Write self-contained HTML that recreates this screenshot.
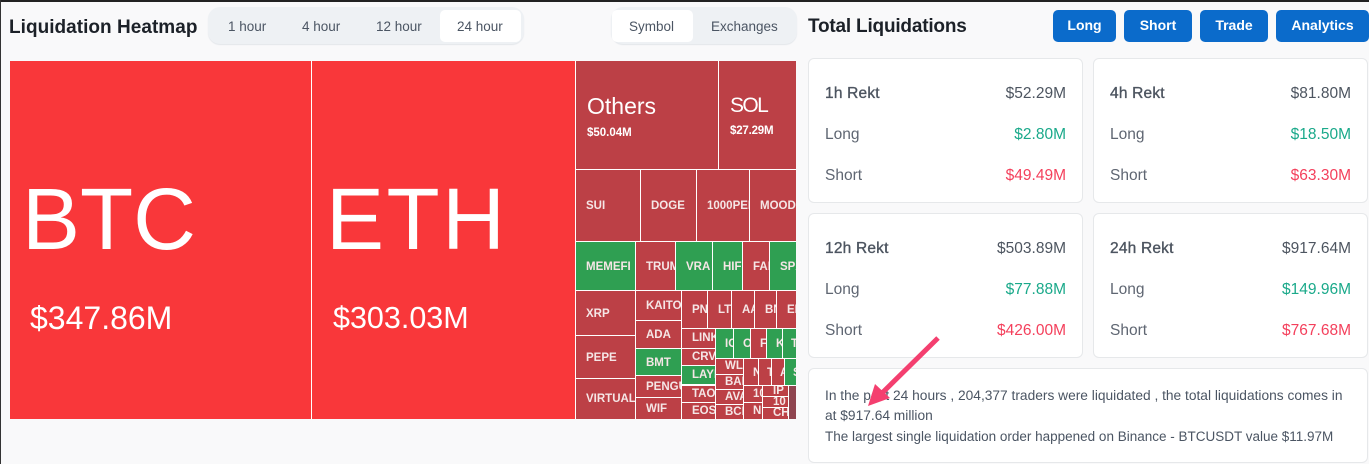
<!DOCTYPE html>
<html><head><meta charset="utf-8">
<style>
*{box-sizing:border-box}
html,body{margin:0;padding:0;width:1369px;height:464px;overflow:hidden;background:#f9f9fa;font-family:"Liberation Sans",sans-serif}
.a{position:absolute;white-space:nowrap}
.c{position:absolute;overflow:hidden;white-space:nowrap;color:#f5e6e6;font-size:11.5px;font-weight:bold;padding-left:10px;padding-top:1px}
.r{background:#bc4046}.g{background:#2f9f52}
.b{position:absolute;top:10px;height:32px;line-height:30px;background:#0b6bcb;color:#fff;font-weight:bold;font-size:14px;text-align:center;border-radius:5px}
.card{position:absolute;background:#fff;border:1px solid #e6e8ea;border-radius:6px}
.t{position:absolute;font-size:13.5px;color:#4b5563;white-space:nowrap;line-height:20px}
.l,.v{position:absolute;font-size:15.5px;line-height:20px;white-space:nowrap;color:#5f6672}
.v{text-align:right;color:#4d5560}
.gr{color:#1aa98a}.rd{color:#f4405c}
.hd{color:#4d5560;font-size:15.5px;-webkit-text-stroke:.35px #4d5560;letter-spacing:.2px}
.p{font-size:13.75px;line-height:20px;color:#4b5563}
</style></head><body>
<div class="a" style="left:0;top:0;width:1369px;height:2px;background:#222"></div>
<div class="a" style="left:0;top:0;width:1px;height:464px;background:#333"></div>

<div class="a" style="left:9px;top:16px;font-size:19px;font-weight:bold;color:#1c2128;line-height:24px;letter-spacing:.03px">Liquidation Heatmap</div>
<div class="a" style="left:208px;top:7px;width:316px;height:37px;background:#eef1f4;border-radius:12px;box-shadow:0 1px 1px #e3e6ea"></div>
<div class="a" style="left:440px;top:10px;width:81px;height:32px;background:#fff;border-radius:5px"></div>
<div class="t" style="left:228px;top:17px">1 hour</div>
<div class="t" style="left:302px;top:17px">4 hour</div>
<div class="t" style="left:376px;top:17px">12 hour</div>
<div class="t" style="left:457px;top:17px">24 hour</div>
<div class="a" style="left:611px;top:7px;width:186px;height:37px;background:#eef1f4;border-radius:12px;box-shadow:0 1px 1px #e3e6ea"></div>
<div class="a" style="left:612px;top:10px;width:81px;height:32px;background:#fff;border-radius:5px"></div>
<div class="t" style="left:629px;top:17px">Symbol</div>
<div class="t" style="left:711px;top:17px">Exchanges</div>

<div class="a" style="left:808px;top:15px;font-size:19px;font-weight:bold;color:#1c2128;line-height:24px;letter-spacing:-.2px">Total Liquidations</div>
<div class="b" style="left:1053px;width:63px">Long</div>
<div class="b" style="left:1124px;width:68px">Short</div>
<div class="b" style="left:1200px;width:68px">Trade</div>
<div class="b" style="left:1276px;width:93px">Analytics</div>

<!-- treemap -->
<div class="a" style="left:10px;top:61px;width:786px;height:358px;background:#fff"></div>
<div class="a" style="left:10px;top:61px;width:301px;height:358px;background:#f9373a;color:#fff">
 <div class="a" style="left:12px;top:109px;font-size:87px;line-height:100px">BTC</div>
 <div class="a" style="left:20px;top:237px;font-size:32px;line-height:40px">$347.86M</div>
</div>
<div class="a" style="left:312px;top:61px;width:263px;height:358px;background:#f9373a;color:#fff">
 <div class="a" style="left:14px;top:109px;font-size:87px;line-height:100px;letter-spacing:2.5px">ETH</div>
 <div class="a" style="left:21px;top:237px;font-size:30.5px;line-height:40px">$303.03M</div>
</div>
<div class="c r" style="left:576px;top:61px;width:142px;height:108px;color:#fff;padding-top:0">
 <div class="a" style="left:11px;top:31px;font-size:23px;font-weight:normal;line-height:28px">Others</div>
 <div class="a" style="left:11px;top:64px;font-size:11.5px;line-height:16px">$50.04M</div>
</div>
<div class="c r" style="left:719px;top:61px;width:77px;height:108px;color:#fff;padding-top:0">
 <div class="a" style="left:11px;top:31px;font-size:21px;font-weight:normal;line-height:28px;letter-spacing:-1.6px">SOL</div>
 <div class="a" style="left:11px;top:62px;font-size:11.5px;line-height:16px;letter-spacing:-.2px">$27.29M</div>
</div>
<div class="c r" style="left:576px;top:170px;width:64px;height:71px;line-height:71px">SUI</div>
<div class="c r" style="left:641px;top:170px;width:55px;height:71px;line-height:71px">DOGE</div>
<div class="c r" style="left:697px;top:170px;width:52px;height:71px;line-height:71px">1000PEPE</div>
<div class="c r" style="left:750px;top:170px;width:46px;height:71px;line-height:71px">MOODENG</div>

<div class="c g" style="left:576px;top:242px;width:59px;height:48px;line-height:48px">MEMEFI</div>
<div class="c r" style="left:636px;top:242px;width:39px;height:48px;line-height:48px">TRUMP</div>
<div class="c g" style="left:676px;top:242px;width:36px;height:48px;line-height:48px">VRA</div>
<div class="c g" style="left:713px;top:242px;width:29px;height:48px;line-height:48px">HIFI</div>
<div class="c r" style="left:743px;top:242px;width:26px;height:48px;line-height:48px">FARTCOIN</div>
<div class="c g" style="left:770px;top:242px;width:26px;height:48px;line-height:48px">SPX</div>

<div class="c r" style="left:576px;top:291px;width:59px;height:44px;line-height:44px">XRP</div>
<div class="c r" style="left:576px;top:336px;width:59px;height:42px;line-height:42px">PEPE</div>
<div class="c r" style="left:576px;top:379px;width:59px;height:40px;line-height:38px">VIRTUAL</div>

<div class="c r" style="left:636px;top:291px;width:45px;height:29px;line-height:29px">KAITO</div>
<div class="c r" style="left:636px;top:321px;width:45px;height:27px;line-height:27px">ADA</div>
<div class="c g" style="left:636px;top:349px;width:45px;height:26px;line-height:26px">BMT</div>
<div class="c r" style="left:636px;top:376px;width:45px;height:21px;line-height:21px">PENGU</div>
<div class="c r" style="left:636px;top:398px;width:45px;height:21px;line-height:21px">WIF</div>

<div class="c r" style="left:682px;top:291px;width:25px;height:37px;line-height:37px">PNUT</div>
<div class="c r" style="left:708px;top:291px;width:23px;height:37px;line-height:37px">LTC</div>
<div class="c r" style="left:732px;top:291px;width:22px;height:37px;line-height:37px">AAVE</div>
<div class="c r" style="left:755px;top:291px;width:21px;height:37px;line-height:37px">BNB</div>
<div class="c r" style="left:777px;top:291px;width:19px;height:37px;line-height:37px">ENA</div>

<div class="c r" style="left:682px;top:329px;width:33px;height:19px;line-height:19px;padding-top:0">LINK</div>
<div class="c r" style="left:682px;top:349px;width:33px;height:16px;line-height:16px;padding-top:0">CRV</div>
<div class="c g" style="left:682px;top:366px;width:33px;height:18px;line-height:18px;padding-top:0">LAYER</div>
<div class="c r" style="left:682px;top:386px;width:33px;height:16px;line-height:16px;padding-top:0">TAO</div>
<div class="c r" style="left:682px;top:403px;width:33px;height:16px;line-height:16px;padding-top:0">EOS</div>

<div class="c g" style="left:716px;top:329px;width:17px;height:29px;line-height:29px;padding-left:9px">ICP</div>
<div class="c g" style="left:734px;top:329px;width:16px;height:29px;line-height:29px;padding-left:9px">OP</div>
<div class="c r" style="left:751px;top:329px;width:15px;height:29px;line-height:29px;padding-left:9px">FIL</div>
<div class="c g" style="left:767px;top:329px;width:15px;height:29px;line-height:29px;padding-left:9px">KAS</div>
<div class="c g" style="left:783px;top:329px;width:13px;height:29px;line-height:29px;padding-left:8px">TIA</div>

<div class="c r" style="left:716px;top:359px;width:27px;height:15px;line-height:15px;padding-left:9px;padding-top:0">WLD</div>
<div class="c r" style="left:716px;top:375px;width:27px;height:14px;line-height:14px;padding-left:9px;padding-top:0">BAL</div>
<div class="c r" style="left:716px;top:390px;width:27px;height:14px;line-height:14px;padding-left:9px;padding-top:0">AVAX</div>
<div class="c r" style="left:716px;top:405px;width:27px;height:14px;line-height:14px;padding-left:9px;padding-top:0">BCH</div>

<div class="c r" style="left:744px;top:359px;width:14px;height:26px;line-height:26px;padding-left:9px">NEAR</div>
<div class="c r" style="left:759px;top:359px;width:12px;height:26px;line-height:26px;padding-left:8px">TON</div>
<div class="c r" style="left:772px;top:359px;width:12px;height:26px;line-height:26px;padding-left:8px">ARB</div>
<div class="c g" style="left:785px;top:359px;width:11px;height:26px;line-height:26px;padding-left:8px">S</div>

<div class="c r" style="left:744px;top:386px;width:18px;height:16px;line-height:16px;padding-left:9px;padding-top:0">10</div>
<div class="c r" style="left:744px;top:403px;width:18px;height:16px;line-height:16px;padding-left:9px;padding-top:0">NE</div>
<div class="c r" style="left:763px;top:386px;width:25px;height:10px;line-height:11px;padding-left:10px;padding-top:0">IP</div>
<div class="c r" style="left:763px;top:397px;width:25px;height:10px;line-height:11px;padding-left:10px;padding-top:0">10</div>
<div class="c r" style="left:763px;top:408px;width:25px;height:11px;line-height:11px;padding-left:10px;padding-top:0">CH</div>
<div class="a" style="left:789px;top:386px;width:7px;height:33px;background:#8f4550"></div>

<!-- cards -->
<div class="card" style="left:808px;top:58px;width:275px;height:145px"></div>
<div class="card" style="left:1093px;top:58px;width:275px;height:145px"></div>
<div class="card" style="left:808px;top:213px;width:275px;height:145px"></div>
<div class="card" style="left:1093px;top:213px;width:275px;height:145px"></div>
<div class="card" style="left:808px;top:368px;width:560px;height:95px"></div>

<div class="l hd" style="left:825px;top:84px">1h Rekt</div><div class="v" style="right:303px;top:84px">$52.29M</div>
<div class="l" style="left:825px;top:125px">Long</div><div class="v gr" style="right:303px;top:125px">$2.80M</div>
<div class="l" style="left:825px;top:166px">Short</div><div class="v rd" style="right:303px;top:166px">$49.49M</div>

<div class="l hd" style="left:1110px;top:84px">4h Rekt</div><div class="v" style="right:18px;top:84px">$81.80M</div>
<div class="l" style="left:1110px;top:125px">Long</div><div class="v gr" style="right:18px;top:125px">$18.50M</div>
<div class="l" style="left:1110px;top:166px">Short</div><div class="v rd" style="right:18px;top:166px">$63.30M</div>

<div class="l hd" style="left:825px;top:239px">12h Rekt</div><div class="v" style="right:303px;top:239px">$503.89M</div>
<div class="l" style="left:825px;top:280px">Long</div><div class="v gr" style="right:303px;top:280px">$77.88M</div>
<div class="l" style="left:825px;top:321px">Short</div><div class="v rd" style="right:303px;top:321px">$426.00M</div>

<div class="l hd" style="left:1110px;top:239px">24h Rekt</div><div class="v" style="right:18px;top:239px">$917.64M</div>
<div class="l" style="left:1110px;top:280px">Long</div><div class="v gr" style="right:18px;top:280px">$149.96M</div>
<div class="l" style="left:1110px;top:321px">Short</div><div class="v rd" style="right:18px;top:321px">$767.68M</div>

<div class="a p" style="left:825px;top:386px">In the past 24 hours , 204,377 traders were liquidated , the total liquidations comes in</div>
<div class="a p" style="left:825px;top:406px">at $917.64 million</div>
<div class="a p" style="left:825px;top:427px;font-size:13.5px">The largest single liquidation order happened on Binance - BTCUSDT value $11.97M</div>

<svg class="a" style="left:0;top:0" width="1369" height="464" viewBox="0 0 1369 464">
<path d="M938 338 L878 397" stroke="#f43f6f" stroke-width="5" fill="none"/>
<path d="M868 406 L875 384 L890 398 Z" fill="#f43f6f"/>
</svg>
</body></html>
